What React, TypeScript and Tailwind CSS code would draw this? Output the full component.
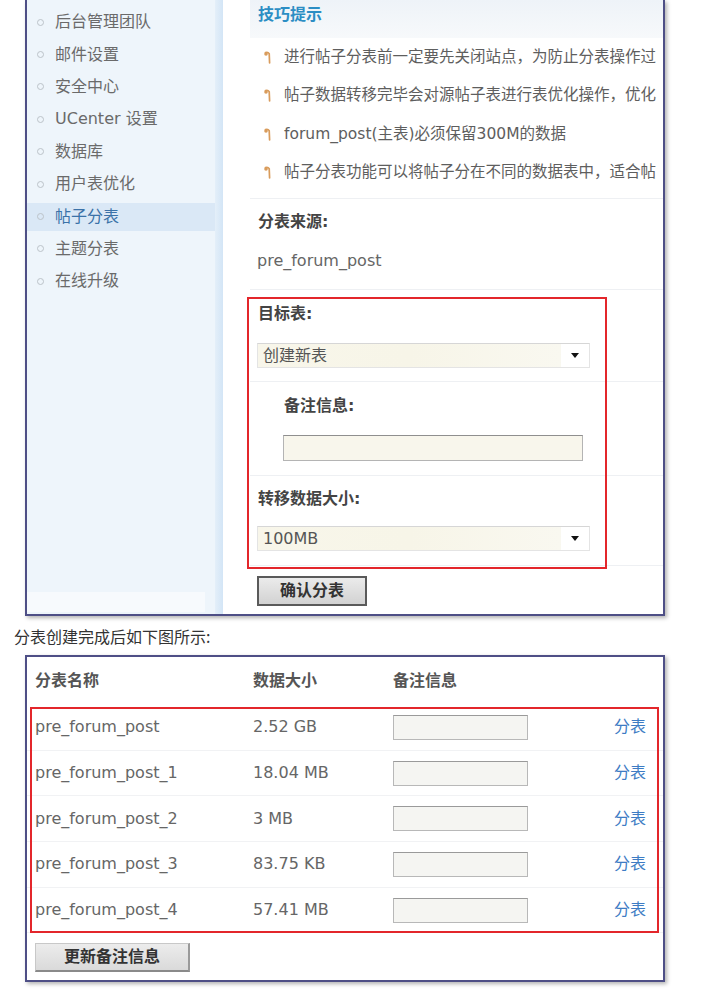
import React from 'react'

const font = { fontFamily: '"DejaVu Sans", "Noto Sans CJK SC", sans-serif' }

const menu = ['后台管理团队', '邮件设置', '安全中心', 'UCenter 设置', '数据库', '用户表优化', '帖子分表', '主题分表', '在线升级']

// 截图右侧被裁掉，只保留能看到的部分
const tips = [
  '进行帖子分表前一定要先关闭站点，为防止分表操作过',
  '帖子数据转移完毕会对源帖子表进行表优化操作，优化',
  'forum_post(主表)必须保留300M的数据',
  '帖子分表功能可以将帖子分在不同的数据表中，适合帖',
]

const tables = [
  { name: 'pre_forum_post', size: '2.52 GB' },
  { name: 'pre_forum_post_1', size: '18.04 MB' },
  { name: 'pre_forum_post_2', size: '3 MB' },
  { name: 'pre_forum_post_3', size: '83.75 KB' },
  { name: 'pre_forum_post_4', size: '57.41 MB' },
]

function TipMark() {
  return (
    <svg width="8" height="13" viewBox="0 0 8 13" className="shrink-0">
      <circle cx="2" cy="3" r="1.8" fill="#d99c5c" />
      <path d="M1.5 1.6 Q4 0.8 5.2 2.6 L5.6 12" stroke="#d99c5c" strokeWidth="1.7" fill="none" strokeLinecap="round" />
    </svg>
  )
}

function FakeSelect({ value }: { value: string }) {
  return (
    <div className="ml-[7px] flex h-[25px] w-[333px] border border-[#e4e4e4] border-t-[#d6d6d6] bg-white">
      <div className="flex flex-1 items-center bg-gradient-to-r from-[#f8f6ea] via-[#f7f5e8] to-[#f9f8f0] pl-[5px] text-[16px] text-[#555]">
        {value}
      </div>
      <div className="flex w-[28px] items-center justify-center">
        <div className="h-0 w-0 border-x-[4px] border-t-[5px] border-x-transparent border-t-[#111]" />
      </div>
    </div>
  )
}

function Line() {
  return <div className="h-px bg-[#eef0f3]" />
}

export default function App() {
  return (
    <div className="relative h-[999px] w-[711px] overflow-hidden bg-white" style={font}>
      {/* 第一张截图 */}
      <div className="ml-[25px] flex h-[616px] w-[640px] overflow-hidden border-x-2 border-b-2 border-[#4e4f86] shadow-[2px_2px_4px_rgba(0,0,0,0.3)]">
        {/* 侧栏 */}
        <div className="flex w-[188px] flex-col bg-[#eef5fb] pt-[6px]">
          {menu.map((item) => {
            const active = item === '帖子分表'
            return (
              <div key={item} className="flex h-[32.4px] items-center">
                <div className={`flex h-[28px] w-full items-center ${active ? 'bg-[#dae8f6]' : ''}`}>
                  <span className="ml-[10px] h-[7px] w-[7px] rounded-full border border-[#bcc3c9]" />
                  <span className={`ml-[11px] text-[16px] leading-none ${active ? 'text-[#3b72a8]' : 'text-[#6a6a6a]'}`}>{item}</span>
                </div>
              </div>
            )
          })}
          <div className="mb-[2px] mt-auto h-[20px] w-[178px] bg-[#f7fafd]" />
        </div>
        <div className="w-[8px] bg-gradient-to-r from-[#e4eff9] to-[#d3e5f6]" />

        {/* 主体 */}
        <div className="relative flex-1 overflow-hidden bg-white pl-[27px]">
          <div className="h-[38px] whitespace-nowrap bg-gradient-to-b from-[#eef3f8] to-[#f7f9fb] pl-[8px] pt-[5px] text-[16px] font-bold leading-[20px] text-[#2c8ec4]">
            技巧提示
          </div>
          {tips.map((t) => (
            <div key={t} className="flex h-[38.5px] items-center whitespace-nowrap pl-[14px]">
              <TipMark />
              <span className="ml-[12px] text-[15.5px] text-[#5e5e5e]">{t}</span>
            </div>
          ))}
          <div className="mt-[6px]">
            <Line />
          </div>
          <div className="flex h-[46px] items-center pl-[8px] text-[16px] font-bold text-[#444]">分表来源:</div>
          <div className="h-[44px] pl-[7px] pt-[6px] text-[16px] leading-[20px] text-[#666]">pre_forum_post</div>
          <Line />
          <div className="flex h-[48px] items-center pl-[8px] text-[16px] font-bold text-[#444]">目标表:</div>
          <div className="h-[43px] pt-[5px]">
            <FakeSelect value="创建新表" />
          </div>
          <Line />
          <div className="flex h-[48px] items-center pl-[34px] text-[16px] font-bold text-[#444]">备注信息:</div>
          <div className="h-[45px] pt-[5px]">
            <div className="ml-[33px] h-[26px] w-[300px] border border-[#b4b4b4] border-t-[#8f8f8f] bg-[#f8f6ec]" />
          </div>
          <Line />
          <div className="flex h-[46px] items-center pl-[8px] text-[16px] font-bold text-[#444]">转移数据大小:</div>
          <div className="h-[43px] pt-[4px]">
            <FakeSelect value="100MB" />
          </div>
          <Line />
          <button className="ml-[7px] mt-[10px] flex h-[30px] w-[110px] items-center justify-center border-2 border-[#5a5a5a] bg-gradient-to-b from-[#ebebeb] to-[#d2d2d2] text-[16px] font-bold text-[#333]">
            确认分表
          </button>

          {/* 红框标注 */}
          <div className="absolute left-[24px] top-[297px] h-[272px] w-[360px] border-2 border-[#e3262b]" />
        </div>
      </div>

      <div className="flex h-[39px] items-center pl-[14px] text-[16px] text-[#333]" style={{ fontFamily: '"Noto Sans CJK SC", sans-serif' }}>
        分表创建完成后如下图所示:
      </div>

      {/* 第二张截图 */}
      <div className="relative ml-[25px] h-[327px] w-[640px] border-2 border-[#4e4f86] bg-white shadow-[2px_2px_4px_rgba(0,0,0,0.3)]">
        <div className="grid h-[48px] grid-cols-[218px_140px_221px_1fr] items-center pl-[8px] text-[16px] font-bold text-[#555]">
          <span>分表名称</span>
          <span>数据大小</span>
          <span>备注信息</span>
          <span />
        </div>
        {tables.map((r) => (
          <div key={r.name} className="grid h-[45.7px] grid-cols-[218px_140px_221px_1fr] items-center border-b border-[#f1f2f4] pl-[8px] text-[16px] text-[#666]">
            <span>{r.name}</span>
            <span>{r.size}</span>
            <span>
              <div className="h-[25px] w-[135px] border border-[#b8b8b8] border-t-[#9a9a9a] bg-[#f5f5f2]" />
            </span>
            <span className="text-[#3e7cc4]">分表</span>
          </div>
        ))}
        <button className="ml-[8px] mt-[10px] flex h-[29px] w-[155px] items-center justify-center border border-[#c8c8c8] border-b-2 border-r-2 border-b-[#8a8a8a] border-r-[#9a9a9a] bg-gradient-to-b from-[#ececec] to-[#dadada] text-[16px] font-bold text-[#333]">
          更新备注信息
        </button>

        {/* 红框标注 */}
        <div className="absolute left-[3px] top-[50px] h-[226px] w-[629px] border-2 border-[#e3262b]" />
      </div>
    </div>
  )
}
